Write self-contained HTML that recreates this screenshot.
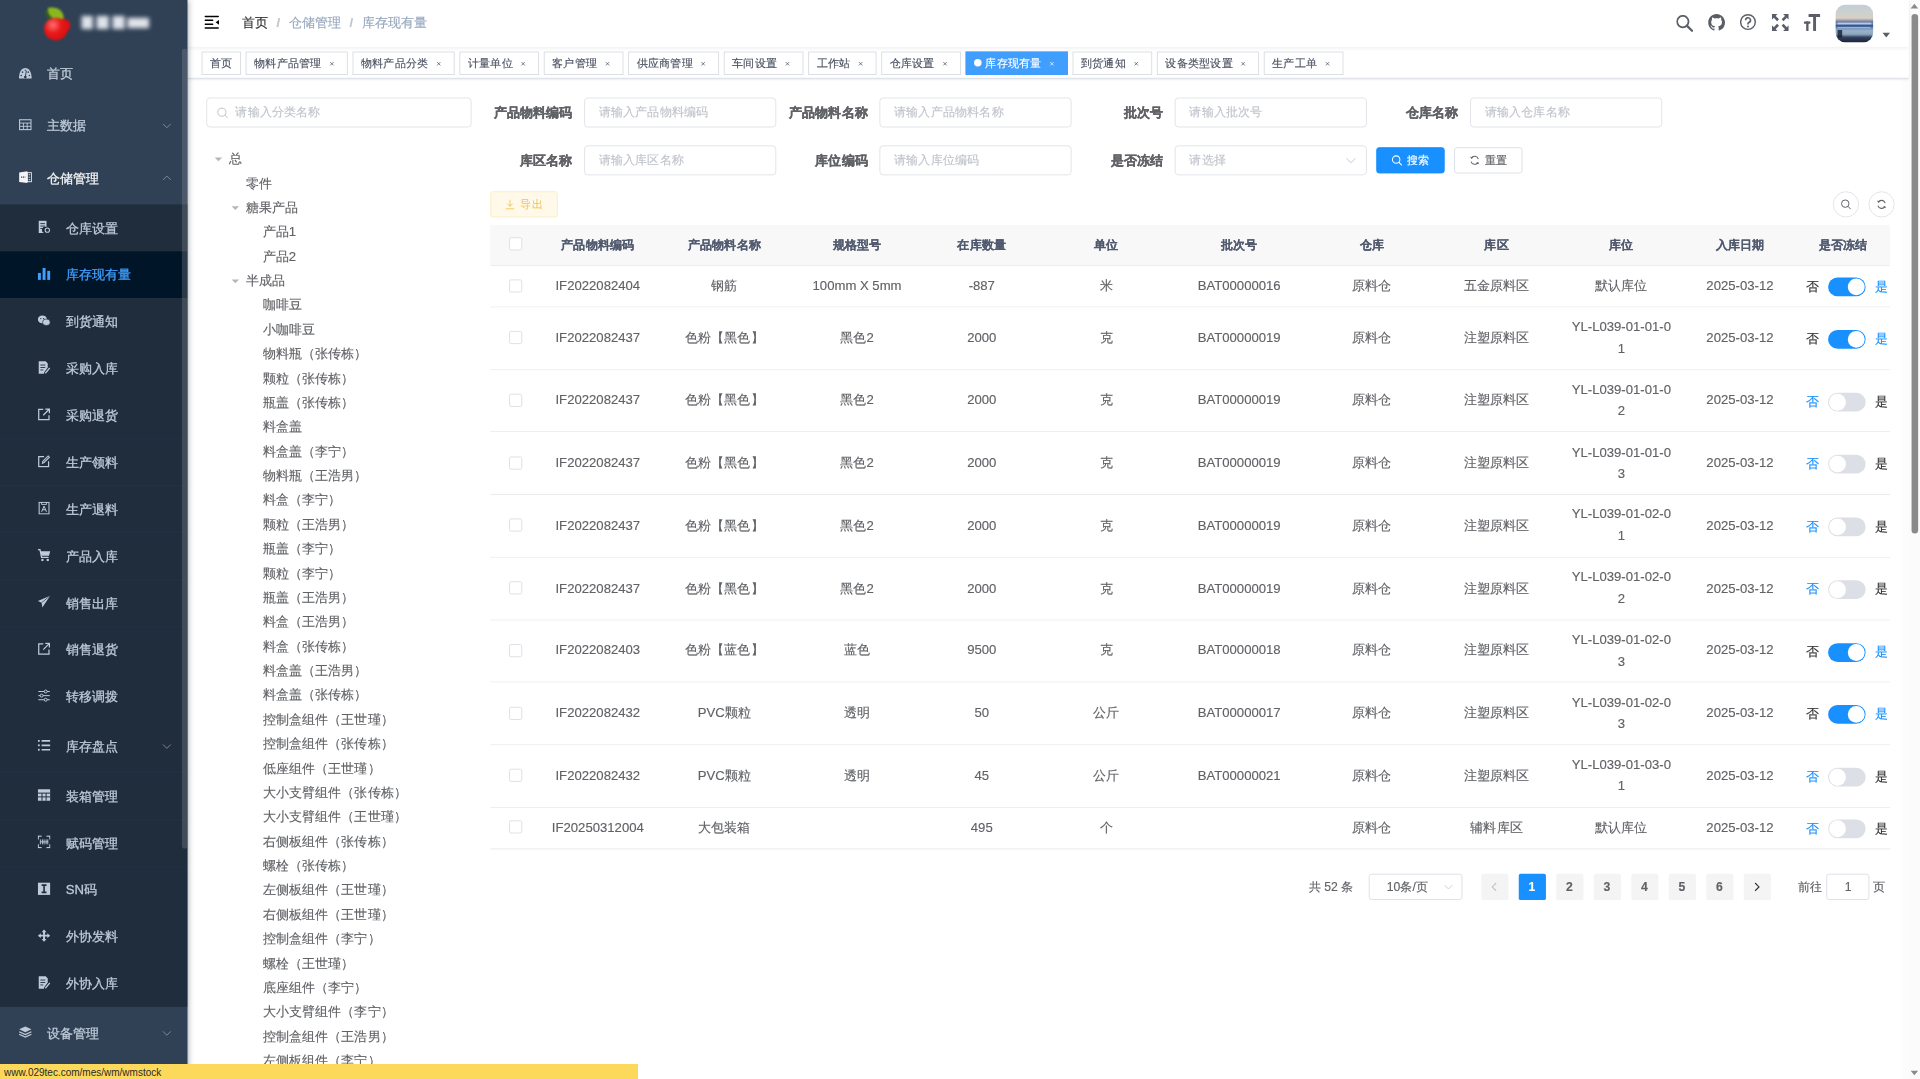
<!DOCTYPE html><html><head><meta charset="utf-8"><title>库存现有量</title><style>
*{box-sizing:border-box;margin:0;padding:0}
html,body{width:1920px;height:1079px;overflow:hidden;background:#fff}
body{font-family:"Liberation Sans",sans-serif;-webkit-font-smoothing:antialiased}
#root{-webkit-text-stroke-width:0.15px;position:absolute;left:0;top:0;width:2048px;height:1151px;transform:scale(0.9375);transform-origin:0 0;overflow:hidden;background:#fff}
#sidebar{position:absolute;left:0;top:0;width:200px;height:1151px;background:#304156;box-shadow:2px 0 6px rgba(0,21,41,.35);z-index:5;overflow:hidden}
.logo{position:absolute;left:0;top:0;width:200px;height:50px}
.cherry{position:absolute;left:45px;top:6px;width:34px;height:38px;filter:blur(1.3px)}
.berry{position:absolute;left:2px;top:13px;width:25px;height:24px;border-radius:50%;background:radial-gradient(circle at 38% 32%,#ff7070 0,#e81818 40%,#d20a0a 100%)}
.berry2{position:absolute;left:14px;top:14px;width:16px;height:15px;border-radius:50%;background:#e01010}
.leaf{position:absolute;left:6px;top:2px;width:17px;height:13px;background:#8cb61e;border-radius:2px 13px 2px 13px;box-shadow:-3px 3px 0 #2f5a2a}
.ltitle{position:absolute;left:87px;top:17px;width:72px;height:15px;filter:blur(2px)}
.ltitle i{position:absolute;top:0;height:14px;background:#dfe3ea}
.mi{position:absolute;left:0;width:200px;height:56px;line-height:56px;font-size:14px;white-space:nowrap}
.mi.top{padding-left:20px}
.mi.sub{padding-left:40px}
.mic{display:inline-block;width:14px;height:14px;vertical-align:middle;margin-right:16px;position:relative;top:-2px}
.mic svg{display:block}
.mtx{vertical-align:middle;position:relative;top:-1px;-webkit-text-stroke-width:0.3px}
.arr{position:absolute;right:16.5px;top:50%;margin-top:-6.5px;width:12px;height:12px}
.sthumb{position:absolute;left:194px;top:52px;width:6px;height:853px;background:rgba(144,147,153,.3);border-radius:3px}
#main{position:absolute;left:200px;top:0;width:1836px;height:1151px}
#navbar{position:absolute;left:200px;top:0;width:1836px;height:50px;background:#fff;box-shadow:0 1px 4px rgba(0,21,41,.08);z-index:3}
.ham{position:absolute;left:17.6px;top:16px;width:16px;height:16px}
.ham svg{display:block}
.bc{position:absolute;left:58px;top:-1px;line-height:50px;font-size:14px;white-space:nowrap}
.b0{color:#303133}
.b1{color:#97a8be}
.sep{margin:0 9px;color:#C0C4CC;font-weight:bold}
.rmi{position:absolute;top:16px;width:18px;height:18px}
.rmi.t15{top:15px}
.rmi svg{display:block}
.avatar{position:absolute;left:1758px;top:5px;width:40px;height:40px;border-radius:10px;overflow:hidden;background:linear-gradient(#c3ced4 0%,#ccd1d0 20%,#d8d0c3 36%,#9c9aad 42%,#5574a8 47%,#7b95bf 51%,#2e508a 56%,#6f8fb9 62%,#9ab2c9 70%,#8ba5bd 79%,#33405e 87%,#1d233a 100%)}
.av1{position:absolute;left:2px;top:19px;width:36px;height:2px;background:rgba(235,240,250,.6)}
.av2{position:absolute;left:2px;top:23.5px;width:35px;height:1.5px;background:rgba(235,240,250,.55)}
.av3{position:absolute;left:2px;top:27px;width:5px;height:8px;background:rgba(15,22,40,.75);filter:blur(.5px)}
.caret{position:absolute;left:1808px;top:35px;width:0;height:0;border-left:4px solid transparent;border-right:4px solid transparent;border-top:5px solid #5a5e66}
#tags{position:absolute;left:200px;top:50px;width:1836px;height:34px;background:#fff;border-bottom:1px solid #d8dce5;box-shadow:0 1px 3px 0 rgba(0,0,0,.12),0 0 3px 0 rgba(0,0,0,.04);z-index:2;white-space:nowrap;font-size:0}
.tag{display:inline-block;position:relative;height:25px;line-height:23px;border:1px solid #dadde3;color:#495060;background:#fff;padding:0 8px;font-size:12px;margin-left:5px;margin-top:5px;vertical-align:top}
.tag:first-child{margin-left:15px}
.tag.active{background:#409EFF;border-color:#409EFF;color:#fff}
.tdot{display:inline-block;width:8px;height:8px;border-radius:50%;background:#fff;margin-right:4px;position:relative;top:-0.5px}
.tclose{display:inline-block;width:16px;height:16px;vertical-align:-3px;margin-left:3px;position:relative}
.tclose svg{position:absolute;left:5px;top:6.5px}
.sinput{position:absolute;left:220px;top:104px;width:282.67px;height:32px;border:1px solid #dfe2e8;border-radius:4px;background:#fff}
.sinput .pi{position:absolute;left:10px;top:9px}
.sinput .ph{position:absolute;left:30px;top:0;line-height:30px;font-size:13px;color:#C0C4CC}
#tree{position:absolute;left:220px;top:156px;width:282.67px;font-size:14px;color:#606266}
.tn{height:26px;line-height:26px;white-space:nowrap}
.caret-r,.caret-n{display:inline-block;width:24px;height:26px;vertical-align:top;position:relative}
.caret-r:after{content:"";position:absolute;left:8.5px;top:11.5px;border-left:4px solid transparent;border-right:4px solid transparent;border-top:4.6px solid #b4b7bd}
.tl{vertical-align:top}
.flabel{position:absolute;width:100px;height:32px;line-height:32px;text-align:right;padding-right:12px;font-size:14px;font-weight:bold;color:#606266;white-space:nowrap;-webkit-text-stroke:0.3px #606266}
.finput{position:absolute;width:205px;height:32px;border:1px solid #dfe2e8;border-radius:4px;background:#fff}
.finput .ph{position:absolute;left:15px;top:0;line-height:30px;font-size:13px;color:#C0C4CC;white-space:nowrap}
.selarr{position:absolute;right:9px;top:8px;width:14px;height:14px}
.btn{position:absolute;height:28px;line-height:26px;font-size:12px;border-radius:3px;border:1px solid #DCDFE6;text-align:center;white-space:nowrap}
.btn .bic{display:inline-block;width:12px;height:12px;vertical-align:middle;margin-right:5px;position:relative;top:-1px}
.btn.primary{background:#1890ff;border-color:#1890ff;color:#fff}
.btn.plain{background:#fff;color:#606266}
.btn.warn{background:#fff9e9;border-color:#fcecc2;color:#f2c04c;-webkit-text-stroke-width:0}
.cbtn{position:absolute;width:28px;height:28px;border-radius:50%;border:1px solid #e0e2e6;background:#fff;padding:7px}
#table{position:absolute;font-size:14px;color:#606266}
.tr{display:flex;border-bottom:1px solid #e8eaee;background:#fff}
.tr.th{background:#f8f8f9;color:#515a6e;font-size:13px;font-weight:bold;-webkit-text-stroke:0.1px #515a6e}
.td{flex:none;display:flex;align-items:center;justify-content:center;text-align:center;overflow:hidden;padding:0 10px;line-height:23px;white-space:nowrap}
.td .cell{line-height:23px;position:relative;top:-0.8px}
.cb{display:inline-block;width:14px;height:14px;border:1px solid #DCDFE6;border-radius:2px;background:#fff;position:relative;top:-0.8px}
.th .cb{top:-1.4px}
.td.sw{justify-content:flex-start;padding-left:10px}
.swl{font-size:14px;color:#303133;line-height:20px}
.swl.act{color:#1890ff}
.swc{display:inline-block;position:relative;top:1px;width:40px;height:20px;border-radius:10px;background:#dcdfe6;margin:0 10px;flex:none}
.swc .knob{position:absolute;left:1px;top:1px;width:18px;height:18px;border-radius:50%;background:#fff}
.swc.on{background:#1890ff}
.swc.on .knob{left:21px}
.ptotal{position:absolute;height:28px;line-height:28px;font-size:13px;color:#606266;white-space:nowrap}
.psize{position:absolute;width:100px;height:28px;line-height:26px;border:1px solid #DCDFE6;border-radius:3px;font-size:13px;color:#606266;padding-left:8px}
.psize span:first-child{position:absolute;left:18.6px}
.psarr{position:absolute;right:8px;top:7px}
.pbtn{position:absolute;width:29px;margin-left:0.5px;height:28px;line-height:28px;background:#f4f4f5;border-radius:2px;text-align:center;font-size:13px;font-weight:bold;color:#606266;padding-top:8px}
.pbtn svg{margin:0 auto}
.pbtn.num{padding-top:0}
.pbtn.pact{background:#1890ff;color:#fff}
.pinput{position:absolute;width:46px;height:28px;line-height:26px;border:1px solid #DCDFE6;border-radius:3px;text-align:center;font-size:13px;color:#606266}
#vscroll{position:absolute;left:2036px;top:0;width:12px;height:1151px;background:#fbfbfb}
#vtrack{position:absolute;left:2027px;top:84px;width:9px;height:1067px;background:linear-gradient(90deg,#fefefe,#fbfbfb)}
#vscroll .up{position:absolute;left:2px;top:4px;border-left:4px solid transparent;border-right:4px solid transparent;border-bottom:5px solid #8a8a8a}
#vscroll .dn{position:absolute;left:2px;bottom:4px;border-left:4px solid transparent;border-right:4px solid transparent;border-top:5px solid #8a8a8a}
#vscroll .th{position:absolute;left:2.5px;top:15px;width:7px;height:553.5px;border-radius:3.5px;background:#8a8a8a}
#status{position:absolute;left:0;top:1063.5px;width:638px;height:15.5px;background:#fcd95b;font-size:10px;line-height:18px;padding-left:4px;color:#2a2a2a;z-index:10;white-space:nowrap}
</style></head><body><div id="root"><div id="sidebar">
<div class="logo"><div class="cherry"><div class="leaf"></div><div class="berry2"></div><div class="berry"></div></div><div class="ltitle"><i style="left:0;width:12px"></i><i style="left:16px;width:13px"></i><i style="left:33px;width:13px"></i><i style="left:49px;top:2px;width:23px;height:11px"></i></div></div>
<div class="mi top" style="top:50px;color:#bfcbd9"><span class="mic"><svg width="14" height="14" viewBox="0 0 16 16" style="overflow:visible"><path d="M0.3 15.8 C0.3 7.5 3.5 3 8 3 C12.5 3 15.7 7.5 15.7 15.8 Z" fill="#bfcbd9"/><path d="M8 13.8 L9.3 6.2" stroke="#304156" stroke-width="1.2"/><circle cx="8" cy="14" r="1.7" fill="#304156"/><circle cx="3" cy="12" r="1" fill="#304156"/><circle cx="4.6" cy="8" r="1" fill="#304156"/><circle cx="8" cy="5.6" r="0.8" fill="#304156"/><circle cx="11.6" cy="8" r="1" fill="#304156"/><circle cx="13" cy="12" r="1" fill="#304156"/></svg></span><span class="mtx">首页</span></div>
<div class="mi top" style="top:106px;color:#bfcbd9"><span class="mic"><svg width="14" height="14" viewBox="0 0 16 16"><rect x="1" y="2" width="14" height="12" fill="none" stroke="#bfcbd9" stroke-width="1.3"/><path d="M1 6 H15 M1 10 H15 M5.7 6 V14 M10.3 6 V14" stroke="#bfcbd9" stroke-width="1.1"/></svg></span><span class="mtx">主数据</span><span class="arr"><svg width="12" height="12" viewBox="0 0 16 16" style="display:block"><path d="M2.5 5.5 L8 11 L13.5 5.5" fill="none" stroke="#909399" stroke-width="1.2"/></svg></span></div>
<div class="mi top" style="top:162px;color:#f4f4f5"><span class="mic"><svg width="14" height="14" viewBox="0 0 16 16"><path d="M0.5 2.2 L10.5 0.8 V15.2 L0.5 13.8 Z" fill="#f4f4f5"/><rect x="10.5" y="2.5" width="5" height="11" fill="none" stroke="#f4f4f5" stroke-width="1.1"/><path d="M12 5 H14 M12 8 H14 M12 11 H14" stroke="#f4f4f5" stroke-width="1"/><path d="M2.8 8 H8" stroke="#304156" stroke-width="1.6" stroke-dasharray="1.5 0.8"/></svg></span><span class="mtx">仓储管理</span><span class="arr"><svg width="12" height="12" viewBox="0 0 16 16" style="display:block"><path d="M2.5 10.5 L8 5 L13.5 10.5" fill="none" stroke="#909399" stroke-width="1.2"/></svg></span></div>
<div class="mi sub" style="top:218px;height:50px;line-height:50px;background:#1f2d3d;color:#bfcbd9"><span class="mic"><svg width="14" height="14" viewBox="0 0 16 16"><path d="M1.5 0.5 H11 V8 A4 4 0 0 0 8 15.5 H1.5 Z" fill="#bfcbd9"/><path d="M3.5 4 H9 M3.5 7 H9 M3.5 10 H7" stroke="#1f2d3d" stroke-width="1.1"/><circle cx="12" cy="12" r="2.6" fill="none" stroke="#bfcbd9" stroke-width="1.3"/></svg></span><span class="mtx">仓库设置</span></div>
<div class="mi sub" style="top:268px;height:50px;line-height:50px;background:#001528;color:#409EFF"><span class="mic"><svg width="14" height="14" viewBox="0 0 16 16"><rect x="0.5" y="7" width="3.6" height="8.5" fill="#409EFF"/><rect x="6.2" y="1" width="3.6" height="14.5" fill="#409EFF"/><rect x="11.9" y="4.5" width="3.6" height="11" fill="#409EFF"/></svg></span><span class="mtx">库存现有量</span></div>
<div class="mi sub" style="top:318px;height:50px;line-height:50px;background:#1f2d3d;color:#bfcbd9"><span class="mic"><svg width="14" height="14" viewBox="0 0 16 16"><ellipse cx="6" cy="6.5" rx="5.5" ry="4.8" fill="#bfcbd9"/><ellipse cx="10.8" cy="10" rx="4.7" ry="4" fill="#bfcbd9" stroke="#1f2d3d" stroke-width="0.8"/><circle cx="4" cy="5.5" r="0.8" fill="#1f2d3d"/><circle cx="7.5" cy="5.5" r="0.8" fill="#1f2d3d"/></svg></span><span class="mtx">到货通知</span></div>
<div class="mi sub" style="top:368px;height:50px;line-height:50px;background:#1f2d3d;color:#bfcbd9"><span class="mic"><svg width="14" height="14" viewBox="0 0 16 16"><path d="M1.5 0.5 H10 L12.5 3 V8 L8 14 V15.5 H1.5 Z" fill="#bfcbd9"/><path d="M3.5 5 H9.5 M3.5 8 H9.5 M3.5 11 H7" stroke="#1f2d3d" stroke-width="1.1"/><path d="M9.5 15 L15 8.5" stroke="#bfcbd9" stroke-width="1.6"/></svg></span><span class="mtx">采购入库</span></div>
<div class="mi sub" style="top:418px;height:50px;line-height:50px;background:#1f2d3d;color:#bfcbd9"><span class="mic"><svg width="14" height="14" viewBox="0 0 16 16"><path d="M7 2 H1.5 V14.5 H14 V9" fill="none" stroke="#bfcbd9" stroke-width="1.5"/><path d="M7 9 L14.5 1.5 M9.5 1.5 H14.5 V6.5" fill="none" stroke="#bfcbd9" stroke-width="1.5"/></svg></span><span class="mtx">采购退货</span></div>
<div class="mi sub" style="top:468px;height:50px;line-height:50px;background:#1f2d3d;color:#bfcbd9"><span class="mic"><svg width="14" height="14" viewBox="0 0 16 16"><path d="M8 2.5 H1.5 V14.5 H13.5 V8" fill="none" stroke="#bfcbd9" stroke-width="1.5"/><path d="M6 10.5 L6.5 8 L13 1.5 L14.5 3 L8 9.5 Z" fill="none" stroke="#bfcbd9" stroke-width="1.3"/></svg></span><span class="mtx">生产领料</span></div>
<div class="mi sub" style="top:518px;height:50px;line-height:50px;background:#1f2d3d;color:#bfcbd9"><span class="mic"><svg width="14" height="14" viewBox="0 0 16 16"><rect x="2" y="1" width="12" height="14" fill="none" stroke="#bfcbd9" stroke-width="1.3"/><path d="M5 1 V3.5 H11 V1" fill="none" stroke="#bfcbd9" stroke-width="1.1"/><path d="M5 12.5 L8 5.5 L11 12.5 M6 10 H10" fill="none" stroke="#bfcbd9" stroke-width="1.2"/></svg></span><span class="mtx">生产退料</span></div>
<div class="mi sub" style="top:568px;height:50px;line-height:50px;background:#1f2d3d;color:#bfcbd9"><span class="mic"><svg width="14" height="14" viewBox="0 0 16 16"><path d="M0.5 1.5 H3 L5 11 H13.5" fill="none" stroke="#bfcbd9" stroke-width="1.6"/><path d="M3.6 3.5 H15.5 L14 9 H4.8 Z" fill="#bfcbd9"/><circle cx="6" cy="14" r="1.5" fill="#bfcbd9"/><circle cx="12.5" cy="14" r="1.5" fill="#bfcbd9"/></svg></span><span class="mtx">产品入库</span></div>
<div class="mi sub" style="top:618px;height:50px;line-height:50px;background:#1f2d3d;color:#bfcbd9"><span class="mic"><svg width="14" height="14" viewBox="0 0 16 16"><path d="M15.5 0.5 L0.5 7 L5 9 L6 15 L8.5 11 L15.5 0.5 Z" fill="#bfcbd9"/><path d="M5 9 L15.5 0.5" stroke="#1f2d3d" stroke-width="0.8"/></svg></span><span class="mtx">销售出库</span></div>
<div class="mi sub" style="top:668px;height:50px;line-height:50px;background:#1f2d3d;color:#bfcbd9"><span class="mic"><svg width="14" height="14" viewBox="0 0 16 16"><path d="M7 2 H1.5 V14.5 H14 V9" fill="none" stroke="#bfcbd9" stroke-width="1.5"/><path d="M7 9 L14.5 1.5 M9.5 1.5 H14.5 V6.5" fill="none" stroke="#bfcbd9" stroke-width="1.5"/></svg></span><span class="mtx">销售退货</span></div>
<div class="mi sub" style="top:718px;height:50px;line-height:50px;background:#1f2d3d;color:#bfcbd9"><span class="mic"><svg width="14" height="14" viewBox="0 0 16 16"><path d="M1 3 H15 M1 8 H15 M1 13 H15" stroke="#bfcbd9" stroke-width="1.2"/><circle cx="10" cy="3" r="1.8" fill="#1f2d3d" stroke="#bfcbd9" stroke-width="1.2"/><circle cx="5" cy="8" r="1.8" fill="#1f2d3d" stroke="#bfcbd9" stroke-width="1.2"/><circle cx="10" cy="13" r="1.8" fill="#1f2d3d" stroke="#bfcbd9" stroke-width="1.2"/></svg></span><span class="mtx">转移调拨</span></div>
<div class="mi sub" style="top:768px;height:56px;line-height:56px;background:#1f2d3d;color:#bfcbd9"><span class="mic"><svg width="14" height="14" viewBox="0 0 16 16"><rect x="0.5" y="1.5" width="2.2" height="2.2" fill="#bfcbd9"/><rect x="0.5" y="6.9" width="2.2" height="2.2" fill="#bfcbd9"/><rect x="0.5" y="12.3" width="2.2" height="2.2" fill="#bfcbd9"/><path d="M5 2.6 H15.5 M5 8 H15.5 M5 13.4 H15.5" stroke="#bfcbd9" stroke-width="2"/></svg></span><span class="mtx">库存盘点</span><span class="arr"><svg width="12" height="12" viewBox="0 0 16 16" style="display:block"><path d="M2.5 5.5 L8 11 L13.5 5.5" fill="none" stroke="#909399" stroke-width="1.2"/></svg></span></div>
<div class="mi sub" style="top:824px;height:50px;line-height:50px;background:#1f2d3d;color:#bfcbd9"><span class="mic"><svg width="14" height="14" viewBox="0 0 16 16"><rect x="0.5" y="1" width="15" height="14" fill="#bfcbd9"/><path d="M0.5 5.7 H15.5 M0.5 10.3 H15.5 M5.5 5.7 V15 M10.5 5.7 V15" stroke="#1f2d3d" stroke-width="1.2"/></svg></span><span class="mtx">装箱管理</span></div>
<div class="mi sub" style="top:874px;height:50px;line-height:50px;background:#1f2d3d;color:#bfcbd9"><span class="mic"><svg width="14" height="14" viewBox="0 0 16 16"><path d="M1 5 V1 H5 M11 1 H15 V5 M15 11 V15 H11 M5 15 H1 V11" fill="none" stroke="#bfcbd9" stroke-width="1.3"/><path d="M3.5 5 V11 M6 5 V11 M8 5 V11 M10.5 5 V11 M12.5 5 V11 M3 8 H13" stroke="#bfcbd9" stroke-width="1.1"/></svg></span><span class="mtx">赋码管理</span></div>
<div class="mi sub" style="top:924px;height:50px;line-height:50px;background:#1f2d3d;color:#bfcbd9"><span class="mic"><svg width="14" height="14" viewBox="0 0 16 16"><rect x="0.5" y="0.5" width="15" height="15" fill="#bfcbd9"/><path d="M5 3.5 H11 M5 12.5 H11 M8 3.5 V12.5" stroke="#1f2d3d" stroke-width="2"/></svg></span><span class="mtx">SN码</span></div>
<div class="mi sub" style="top:974px;height:50px;line-height:50px;background:#1f2d3d;color:#bfcbd9"><span class="mic"><svg width="14" height="14" viewBox="0 0 16 16"><path d="M8 0.5 L11 4 H9.2 V6.8 H12 V5 L15.5 8 L12 11 V9.2 H9.2 V12 H11 L8 15.5 L5 12 H6.8 V9.2 H4 V11 L0.5 8 L4 5 V6.8 H6.8 V4 H5 Z" fill="#bfcbd9"/></svg></span><span class="mtx">外协发料</span></div>
<div class="mi sub" style="top:1024px;height:50px;line-height:50px;background:#1f2d3d;color:#bfcbd9"><span class="mic"><svg width="14" height="14" viewBox="0 0 16 16"><path d="M1.5 0.5 H10 L12.5 3 V8 L8 14 V15.5 H1.5 Z" fill="#bfcbd9"/><path d="M3.5 5 H9.5 M3.5 8 H9.5 M3.5 11 H7" stroke="#1f2d3d" stroke-width="1.1"/><path d="M9.5 15 L15 8.5" stroke="#bfcbd9" stroke-width="1.6"/></svg></span><span class="mtx">外协入库</span></div>
<div class="mi top" style="top:1074px;color:#bfcbd9"><span class="mic"><svg width="14" height="14" viewBox="0 0 16 16"><path d="M8 1 L15.5 4.5 L8 8 L0.5 4.5 Z" fill="#bfcbd9"/><path d="M0.5 7.5 L8 11 L15.5 7.5 M0.5 10.5 L8 14 L15.5 10.5" fill="none" stroke="#bfcbd9" stroke-width="1.6"/></svg></span><span class="mtx">设备管理</span><span class="arr"><svg width="12" height="12" viewBox="0 0 16 16" style="display:block"><path d="M2.5 5.5 L8 11 L13.5 5.5" fill="none" stroke="#909399" stroke-width="1.2"/></svg></span></div>
<div class="sthumb"></div>
</div><div id="navbar">
<div class="ham"><svg width="16" height="16" viewBox="0 0 16 16"><g fill="#000"><rect x="0" y="0.7" width="15.5" height="1.7" rx="0.8"/><rect x="0" y="4.8" width="9.6" height="1.7" rx="0.8"/><rect x="0" y="8.95" width="9.6" height="1.7" rx="0.8"/><rect x="0" y="13.05" width="15.5" height="1.7" rx="0.8"/><path d="M15.6 5.2 V10.3 L12 7.75 Z"/></g></svg></div>
<div class="bc"><span class="b0">首页</span><span class="sep">/</span><span class="b1">仓储管理</span><span class="sep">/</span><span class="b1">库存现有量</span></div>
<div class="rmi" style="left:1588px"><svg width="18" height="18" viewBox="0 0 18 18"><circle cx="7" cy="7" r="6.1" fill="none" stroke="#5a5e66" stroke-width="1.9"/><path d="M11.3 11.3 L16.8 16.8" stroke="#5a5e66" stroke-width="2.4" stroke-linecap="round"/></svg></div>
<div class="rmi t15" style="left:1622px"><svg width="18" height="18" viewBox="0 0 16 16"><path fill="#5a5e66" d="M8 0C3.58 0 0 3.58 0 8c0 3.54 2.29 6.53 5.47 7.59.4.07.55-.17.55-.38 0-.19-.01-.82-.01-1.49-2.01.37-2.53-.49-2.69-.94-.09-.23-.48-.94-.82-1.13-.28-.15-.68-.52-.01-.53.63-.01 1.08.58 1.23.82.72 1.21 1.87.87 2.33.66.07-.52.28-.87.51-1.07-1.78-.2-3.64-.89-3.64-3.95 0-.87.31-1.59.82-2.15-.08-.2-.36-1.02.08-2.12 0 0 .67-.21 2.2.82.64-.18 1.32-.27 2-.27.68 0 1.36.09 2 .27 1.53-1.04 2.2-.82 2.2-.82.44 1.1.16 1.92.08 2.12.51.56.82 1.27.82 2.15 0 3.07-1.87 3.75-3.65 3.95.29.25.54.73.54 1.48 0 1.07-.01 1.93-.01 2.2 0 .21.15.46.55.38A8.013 8.013 0 0016 8c0-4.42-3.58-8-8-8z"/></svg></div>
<div class="rmi t15" style="left:1656px"><svg width="18" height="18" viewBox="0 0 18 18"><circle cx="8.5" cy="8.5" r="7.8" fill="none" stroke="#5a5e66" stroke-width="1.5"/><path d="M6 6.6 A2.6 2.6 0 1 1 9.4 9 C8.8 9.3 8.5 9.8 8.5 10.5 V11.2" fill="none" stroke="#5a5e66" stroke-width="1.7"/><circle cx="8.5" cy="13.3" r="1" fill="#5a5e66"/></svg></div>
<div class="rmi t15" style="left:1690px"><svg width="18" height="18" viewBox="0 0 18 18"><g fill="#5a5e66"><path d="M0 0 H6 L0 6 Z"/><path d="M18 0 V6 L12 0 Z"/><path d="M0 18 V12 L6 18 Z"/><path d="M18 18 H12 L18 12 Z"/></g><g stroke="#5a5e66" stroke-width="2.8"><path d="M2 2 L6.6 6.6 M16 2 L11.4 6.6 M2 16 L6.6 11.4 M16 16 L11.4 11.4"/></g></svg></div>
<div class="rmi t15" style="left:1724px"><svg width="18" height="18" viewBox="0 0 18 18"><g fill="#5a5e66"><rect x="5.1" y="0" width="12.4" height="3.1" rx="0.6"/><rect x="10" y="0" width="3.1" height="18"/><rect x="0" y="7.8" width="7.1" height="2.5" rx="0.5"/><rect x="2.6" y="7.8" width="2.5" height="10.2"/></g></svg></div>
<div class="avatar"><div class="av1"></div><div class="av2"></div><div class="av3"></div></div>
<div class="caret"></div>
</div><div id="tags"><span class="tag">首页</span><span class="tag">物料产品管理<span class="tclose"><svg width="6" height="6" viewBox="0 0 10 10" style="display:block"><path d="M2 2 L8 8 M8 2 L2 8" stroke="#495060" stroke-width="1.3"/></svg></span></span><span class="tag">物料产品分类<span class="tclose"><svg width="6" height="6" viewBox="0 0 10 10" style="display:block"><path d="M2 2 L8 8 M8 2 L2 8" stroke="#495060" stroke-width="1.3"/></svg></span></span><span class="tag">计量单位<span class="tclose"><svg width="6" height="6" viewBox="0 0 10 10" style="display:block"><path d="M2 2 L8 8 M8 2 L2 8" stroke="#495060" stroke-width="1.3"/></svg></span></span><span class="tag">客户管理<span class="tclose"><svg width="6" height="6" viewBox="0 0 10 10" style="display:block"><path d="M2 2 L8 8 M8 2 L2 8" stroke="#495060" stroke-width="1.3"/></svg></span></span><span class="tag">供应商管理<span class="tclose"><svg width="6" height="6" viewBox="0 0 10 10" style="display:block"><path d="M2 2 L8 8 M8 2 L2 8" stroke="#495060" stroke-width="1.3"/></svg></span></span><span class="tag">车间设置<span class="tclose"><svg width="6" height="6" viewBox="0 0 10 10" style="display:block"><path d="M2 2 L8 8 M8 2 L2 8" stroke="#495060" stroke-width="1.3"/></svg></span></span><span class="tag">工作站<span class="tclose"><svg width="6" height="6" viewBox="0 0 10 10" style="display:block"><path d="M2 2 L8 8 M8 2 L2 8" stroke="#495060" stroke-width="1.3"/></svg></span></span><span class="tag">仓库设置<span class="tclose"><svg width="6" height="6" viewBox="0 0 10 10" style="display:block"><path d="M2 2 L8 8 M8 2 L2 8" stroke="#495060" stroke-width="1.3"/></svg></span></span><span class="tag active"><span class="tdot"></span>库存现有量<span class="tclose"><svg width="6" height="6" viewBox="0 0 10 10" style="display:block"><path d="M2 2 L8 8 M8 2 L2 8" stroke="#fff" stroke-width="1.3"/></svg></span></span><span class="tag">到货通知<span class="tclose"><svg width="6" height="6" viewBox="0 0 10 10" style="display:block"><path d="M2 2 L8 8 M8 2 L2 8" stroke="#495060" stroke-width="1.3"/></svg></span></span><span class="tag">设备类型设置<span class="tclose"><svg width="6" height="6" viewBox="0 0 10 10" style="display:block"><path d="M2 2 L8 8 M8 2 L2 8" stroke="#495060" stroke-width="1.3"/></svg></span></span><span class="tag">生产工单<span class="tclose"><svg width="6" height="6" viewBox="0 0 10 10" style="display:block"><path d="M2 2 L8 8 M8 2 L2 8" stroke="#495060" stroke-width="1.3"/></svg></span></span></div><div class="sinput"><span class="pi"><svg width="13" height="13" viewBox="0 0 16 16" style="display:block"><circle cx="7" cy="7" r="5.3" fill="none" stroke="#C0C4CC" stroke-width="1.3"/><path d="M11 11 L14.5 14.5" stroke="#C0C4CC" stroke-width="1.3" stroke-linecap="round"/></svg></span><span class="ph">请输入分类名称</span></div><div id="tree"><div class="tn" style="padding-left:0px"><span class="caret-r"></span><span class="tl">总</span></div><div class="tn" style="padding-left:18px"><span class="caret-n"></span><span class="tl">零件</span></div><div class="tn" style="padding-left:18px"><span class="caret-r"></span><span class="tl">糖果产品</span></div><div class="tn" style="padding-left:36px"><span class="caret-n"></span><span class="tl">产品1</span></div><div class="tn" style="padding-left:36px"><span class="caret-n"></span><span class="tl">产品2</span></div><div class="tn" style="padding-left:18px"><span class="caret-r"></span><span class="tl">半成品</span></div><div class="tn" style="padding-left:36px"><span class="caret-n"></span><span class="tl">咖啡豆</span></div><div class="tn" style="padding-left:36px"><span class="caret-n"></span><span class="tl">小咖啡豆</span></div><div class="tn" style="padding-left:36px"><span class="caret-n"></span><span class="tl">物料瓶（张传栋）</span></div><div class="tn" style="padding-left:36px"><span class="caret-n"></span><span class="tl">颗粒（张传栋）</span></div><div class="tn" style="padding-left:36px"><span class="caret-n"></span><span class="tl">瓶盖（张传栋）</span></div><div class="tn" style="padding-left:36px"><span class="caret-n"></span><span class="tl">料盒盖</span></div><div class="tn" style="padding-left:36px"><span class="caret-n"></span><span class="tl">料盒盖（李宁）</span></div><div class="tn" style="padding-left:36px"><span class="caret-n"></span><span class="tl">物料瓶（王浩男）</span></div><div class="tn" style="padding-left:36px"><span class="caret-n"></span><span class="tl">料盒（李宁）</span></div><div class="tn" style="padding-left:36px"><span class="caret-n"></span><span class="tl">颗粒（王浩男）</span></div><div class="tn" style="padding-left:36px"><span class="caret-n"></span><span class="tl">瓶盖（李宁）</span></div><div class="tn" style="padding-left:36px"><span class="caret-n"></span><span class="tl">颗粒（李宁）</span></div><div class="tn" style="padding-left:36px"><span class="caret-n"></span><span class="tl">瓶盖（王浩男）</span></div><div class="tn" style="padding-left:36px"><span class="caret-n"></span><span class="tl">料盒（王浩男）</span></div><div class="tn" style="padding-left:36px"><span class="caret-n"></span><span class="tl">料盒（张传栋）</span></div><div class="tn" style="padding-left:36px"><span class="caret-n"></span><span class="tl">料盒盖（王浩男）</span></div><div class="tn" style="padding-left:36px"><span class="caret-n"></span><span class="tl">料盒盖（张传栋）</span></div><div class="tn" style="padding-left:36px"><span class="caret-n"></span><span class="tl">控制盒组件（王世瑾）</span></div><div class="tn" style="padding-left:36px"><span class="caret-n"></span><span class="tl">控制盒组件（张传栋）</span></div><div class="tn" style="padding-left:36px"><span class="caret-n"></span><span class="tl">低座组件（王世瑾）</span></div><div class="tn" style="padding-left:36px"><span class="caret-n"></span><span class="tl">大小支臂组件（张传栋）</span></div><div class="tn" style="padding-left:36px"><span class="caret-n"></span><span class="tl">大小支臂组件（王世瑾）</span></div><div class="tn" style="padding-left:36px"><span class="caret-n"></span><span class="tl">右侧板组件（张传栋）</span></div><div class="tn" style="padding-left:36px"><span class="caret-n"></span><span class="tl">螺栓（张传栋）</span></div><div class="tn" style="padding-left:36px"><span class="caret-n"></span><span class="tl">左侧板组件（王世瑾）</span></div><div class="tn" style="padding-left:36px"><span class="caret-n"></span><span class="tl">右侧板组件（王世瑾）</span></div><div class="tn" style="padding-left:36px"><span class="caret-n"></span><span class="tl">控制盒组件（李宁）</span></div><div class="tn" style="padding-left:36px"><span class="caret-n"></span><span class="tl">螺栓（王世瑾）</span></div><div class="tn" style="padding-left:36px"><span class="caret-n"></span><span class="tl">底座组件（李宁）</span></div><div class="tn" style="padding-left:36px"><span class="caret-n"></span><span class="tl">大小支臂组件（李宁）</span></div><div class="tn" style="padding-left:36px"><span class="caret-n"></span><span class="tl">控制盒组件（王浩男）</span></div><div class="tn" style="padding-left:36px"><span class="caret-n"></span><span class="tl">左侧板组件（李宁）</span></div><div class="tn" style="padding-left:36px"><span class="caret-n"></span><span class="tl">右侧板组件（李宁）</span></div></div><div class="flabel" style="left:522.67px;top:104px">产品物料编码</div><div class="finput" style="left:622.67px;top:104px"><span class="ph">请输入产品物料编码</span></div><div class="flabel" style="left:837.67px;top:104px">产品物料名称</div><div class="finput" style="left:937.67px;top:104px"><span class="ph">请输入产品物料名称</span></div><div class="flabel" style="left:1152.67px;top:104px">批次号</div><div class="finput" style="left:1252.67px;top:104px"><span class="ph">请输入批次号</span></div><div class="flabel" style="left:1467.67px;top:104px">仓库名称</div><div class="finput" style="left:1567.67px;top:104px"><span class="ph">请输入仓库名称</span></div><div class="flabel" style="left:522.67px;top:154.7px">库区名称</div><div class="finput" style="left:622.67px;top:154.7px"><span class="ph">请输入库区名称</span></div><div class="flabel" style="left:837.67px;top:154.7px">库位编码</div><div class="finput" style="left:937.67px;top:154.7px"><span class="ph">请输入库位编码</span></div><div class="flabel" style="left:1152.67px;top:154.7px">是否冻结</div><div class="finput" style="left:1252.67px;top:154.7px"><span class="ph">请选择</span><span class="selarr"><svg width="14" height="14" viewBox="0 0 16 16" style="display:block"><path d="M2.5 5.5 L8 11 L13.5 5.5" fill="none" stroke="#C0C4CC" stroke-width="1.1"/></svg></span></div><div class="btn primary" style="left:1467.67px;top:156.7px;width:73px"><span class="bic"><svg width="12" height="12" viewBox="0 0 16 16" style="display:block"><circle cx="7" cy="7" r="5.3" fill="none" stroke="#fff" stroke-width="1.5"/><path d="M11 11 L14.5 14.5" stroke="#fff" stroke-width="1.5" stroke-linecap="round"/></svg></span>搜索</div><div class="btn plain" style="left:1550.67px;top:156.7px;width:73px"><span class="bic"><svg width="12" height="12" viewBox="0 0 16 16" style="display:block"><path d="M13.2 6.2 A5.5 5.5 0 0 0 3.2 5" fill="none" stroke="#606266" stroke-width="1.5"/><path d="M2.8 9.8 A5.5 5.5 0 0 0 12.8 11" fill="none" stroke="#606266" stroke-width="1.5"/><path d="M1.5 2.5 L3.2 5.6 L6.3 4.3 Z" fill="#606266"/><path d="M14.5 13.5 L12.8 10.4 L9.7 11.7 Z" fill="#606266"/></svg></span>重置</div><div class="btn warn" style="left:522.67px;top:204px;width:72px"><span class="bic"><svg width="12" height="12" viewBox="0 0 16 16" style="display:block"><path d="M8 1.5 V10.5 M4.2 7 L8 10.8 L11.8 7" fill="none" stroke="#f2c04c" stroke-width="1.2"/><path d="M2 14.3 H14" stroke="#f2c04c" stroke-width="1.2"/></svg></span>导出</div><div class="cbtn" style="left:1955px;top:204px"><svg width="12" height="12" viewBox="0 0 16 16" style="display:block"><circle cx="7" cy="7" r="5.3" fill="none" stroke="#606266" stroke-width="1.4"/><path d="M11 11 L14.5 14.5" stroke="#606266" stroke-width="1.4" stroke-linecap="round"/></svg></div><div class="cbtn" style="left:1993px;top:204px"><svg width="12" height="12" viewBox="0 0 16 16" style="display:block"><path d="M13.2 6.2 A5.5 5.5 0 0 0 3.2 5" fill="none" stroke="#606266" stroke-width="1.5"/><path d="M2.8 9.8 A5.5 5.5 0 0 0 12.8 11" fill="none" stroke="#606266" stroke-width="1.5"/><path d="M1.5 2.5 L3.2 5.6 L6.3 4.3 Z" fill="#606266"/><path d="M14.5 13.5 L12.8 10.4 L9.7 11.7 Z" fill="#606266"/></svg></div><div id="table" style="left:522.67px;top:240.2px;width:1493.33px"><div class="tr th" style="height:43.8px"><div class="td" style="width:55px"><span class="cb"></span></div><div class="td" style="width:120px">产品物料编码</div><div class="td" style="width:150px">产品物料名称</div><div class="td" style="width:133.05499999999998px">规格型号</div><div class="td" style="width:133.05499999999998px">在库数量</div><div class="td" style="width:133.05499999999998px">单位</div><div class="td" style="width:150px">批次号</div><div class="td" style="width:133.05499999999998px">仓库</div><div class="td" style="width:133.05499999999998px">库区</div><div class="td" style="width:133.05499999999998px">库位</div><div class="td" style="width:120px">入库日期</div><div class="td" style="width:100px">是否冻结</div></div><div class="tr" style="height:44.0px"><div class="td" style="width:55px"><span class="cb"></span></div><div class="td" style="width:120px"><div class="cell">IF2022082404</div></div><div class="td" style="width:150px"><div class="cell">钢筋</div></div><div class="td" style="width:133.05499999999998px"><div class="cell">100mm X 5mm</div></div><div class="td" style="width:133.05499999999998px"><div class="cell">-887</div></div><div class="td" style="width:133.05499999999998px"><div class="cell">米</div></div><div class="td" style="width:150px"><div class="cell">BAT00000016</div></div><div class="td" style="width:133.05499999999998px"><div class="cell">原料仓</div></div><div class="td" style="width:133.05499999999998px"><div class="cell">五金原料区</div></div><div class="td" style="width:133.05499999999998px"><div class="cell">默认库位</div></div><div class="td" style="width:120px"><div class="cell">2025-03-12</div></div><div class="td sw" style="width:100px"><span class="swl ">否</span><span class="swc on"><span class="knob"></span></span><span class="swl act">是</span></div></div><div class="tr" style="height:66.75px"><div class="td" style="width:55px"><span class="cb"></span></div><div class="td" style="width:120px"><div class="cell">IF2022082437</div></div><div class="td" style="width:150px"><div class="cell">色粉【黑色】</div></div><div class="td" style="width:133.05499999999998px"><div class="cell">黑色2</div></div><div class="td" style="width:133.05499999999998px"><div class="cell">2000</div></div><div class="td" style="width:133.05499999999998px"><div class="cell">克</div></div><div class="td" style="width:150px"><div class="cell">BAT00000019</div></div><div class="td" style="width:133.05499999999998px"><div class="cell">原料仓</div></div><div class="td" style="width:133.05499999999998px"><div class="cell">注塑原料区</div></div><div class="td" style="width:133.05499999999998px"><div class="cell">YL-L039-01-01-0<br>1</div></div><div class="td" style="width:120px"><div class="cell">2025-03-12</div></div><div class="td sw" style="width:100px"><span class="swl ">否</span><span class="swc on"><span class="knob"></span></span><span class="swl act">是</span></div></div><div class="tr" style="height:66.75px"><div class="td" style="width:55px"><span class="cb"></span></div><div class="td" style="width:120px"><div class="cell">IF2022082437</div></div><div class="td" style="width:150px"><div class="cell">色粉【黑色】</div></div><div class="td" style="width:133.05499999999998px"><div class="cell">黑色2</div></div><div class="td" style="width:133.05499999999998px"><div class="cell">2000</div></div><div class="td" style="width:133.05499999999998px"><div class="cell">克</div></div><div class="td" style="width:150px"><div class="cell">BAT00000019</div></div><div class="td" style="width:133.05499999999998px"><div class="cell">原料仓</div></div><div class="td" style="width:133.05499999999998px"><div class="cell">注塑原料区</div></div><div class="td" style="width:133.05499999999998px"><div class="cell">YL-L039-01-01-0<br>2</div></div><div class="td" style="width:120px"><div class="cell">2025-03-12</div></div><div class="td sw" style="width:100px"><span class="swl act">否</span><span class="swc "><span class="knob"></span></span><span class="swl ">是</span></div></div><div class="tr" style="height:66.75px"><div class="td" style="width:55px"><span class="cb"></span></div><div class="td" style="width:120px"><div class="cell">IF2022082437</div></div><div class="td" style="width:150px"><div class="cell">色粉【黑色】</div></div><div class="td" style="width:133.05499999999998px"><div class="cell">黑色2</div></div><div class="td" style="width:133.05499999999998px"><div class="cell">2000</div></div><div class="td" style="width:133.05499999999998px"><div class="cell">克</div></div><div class="td" style="width:150px"><div class="cell">BAT00000019</div></div><div class="td" style="width:133.05499999999998px"><div class="cell">原料仓</div></div><div class="td" style="width:133.05499999999998px"><div class="cell">注塑原料区</div></div><div class="td" style="width:133.05499999999998px"><div class="cell">YL-L039-01-01-0<br>3</div></div><div class="td" style="width:120px"><div class="cell">2025-03-12</div></div><div class="td sw" style="width:100px"><span class="swl act">否</span><span class="swc "><span class="knob"></span></span><span class="swl ">是</span></div></div><div class="tr" style="height:66.75px"><div class="td" style="width:55px"><span class="cb"></span></div><div class="td" style="width:120px"><div class="cell">IF2022082437</div></div><div class="td" style="width:150px"><div class="cell">色粉【黑色】</div></div><div class="td" style="width:133.05499999999998px"><div class="cell">黑色2</div></div><div class="td" style="width:133.05499999999998px"><div class="cell">2000</div></div><div class="td" style="width:133.05499999999998px"><div class="cell">克</div></div><div class="td" style="width:150px"><div class="cell">BAT00000019</div></div><div class="td" style="width:133.05499999999998px"><div class="cell">原料仓</div></div><div class="td" style="width:133.05499999999998px"><div class="cell">注塑原料区</div></div><div class="td" style="width:133.05499999999998px"><div class="cell">YL-L039-01-02-0<br>1</div></div><div class="td" style="width:120px"><div class="cell">2025-03-12</div></div><div class="td sw" style="width:100px"><span class="swl act">否</span><span class="swc "><span class="knob"></span></span><span class="swl ">是</span></div></div><div class="tr" style="height:66.75px"><div class="td" style="width:55px"><span class="cb"></span></div><div class="td" style="width:120px"><div class="cell">IF2022082437</div></div><div class="td" style="width:150px"><div class="cell">色粉【黑色】</div></div><div class="td" style="width:133.05499999999998px"><div class="cell">黑色2</div></div><div class="td" style="width:133.05499999999998px"><div class="cell">2000</div></div><div class="td" style="width:133.05499999999998px"><div class="cell">克</div></div><div class="td" style="width:150px"><div class="cell">BAT00000019</div></div><div class="td" style="width:133.05499999999998px"><div class="cell">原料仓</div></div><div class="td" style="width:133.05499999999998px"><div class="cell">注塑原料区</div></div><div class="td" style="width:133.05499999999998px"><div class="cell">YL-L039-01-02-0<br>2</div></div><div class="td" style="width:120px"><div class="cell">2025-03-12</div></div><div class="td sw" style="width:100px"><span class="swl act">否</span><span class="swc "><span class="knob"></span></span><span class="swl ">是</span></div></div><div class="tr" style="height:66.75px"><div class="td" style="width:55px"><span class="cb"></span></div><div class="td" style="width:120px"><div class="cell">IF2022082403</div></div><div class="td" style="width:150px"><div class="cell">色粉【蓝色】</div></div><div class="td" style="width:133.05499999999998px"><div class="cell">蓝色</div></div><div class="td" style="width:133.05499999999998px"><div class="cell">9500</div></div><div class="td" style="width:133.05499999999998px"><div class="cell">克</div></div><div class="td" style="width:150px"><div class="cell">BAT00000018</div></div><div class="td" style="width:133.05499999999998px"><div class="cell">原料仓</div></div><div class="td" style="width:133.05499999999998px"><div class="cell">注塑原料区</div></div><div class="td" style="width:133.05499999999998px"><div class="cell">YL-L039-01-02-0<br>3</div></div><div class="td" style="width:120px"><div class="cell">2025-03-12</div></div><div class="td sw" style="width:100px"><span class="swl ">否</span><span class="swc on"><span class="knob"></span></span><span class="swl act">是</span></div></div><div class="tr" style="height:66.75px"><div class="td" style="width:55px"><span class="cb"></span></div><div class="td" style="width:120px"><div class="cell">IF2022082432</div></div><div class="td" style="width:150px"><div class="cell">PVC颗粒</div></div><div class="td" style="width:133.05499999999998px"><div class="cell">透明</div></div><div class="td" style="width:133.05499999999998px"><div class="cell">50</div></div><div class="td" style="width:133.05499999999998px"><div class="cell">公斤</div></div><div class="td" style="width:150px"><div class="cell">BAT00000017</div></div><div class="td" style="width:133.05499999999998px"><div class="cell">原料仓</div></div><div class="td" style="width:133.05499999999998px"><div class="cell">注塑原料区</div></div><div class="td" style="width:133.05499999999998px"><div class="cell">YL-L039-01-02-0<br>3</div></div><div class="td" style="width:120px"><div class="cell">2025-03-12</div></div><div class="td sw" style="width:100px"><span class="swl ">否</span><span class="swc on"><span class="knob"></span></span><span class="swl act">是</span></div></div><div class="tr" style="height:66.75px"><div class="td" style="width:55px"><span class="cb"></span></div><div class="td" style="width:120px"><div class="cell">IF2022082432</div></div><div class="td" style="width:150px"><div class="cell">PVC颗粒</div></div><div class="td" style="width:133.05499999999998px"><div class="cell">透明</div></div><div class="td" style="width:133.05499999999998px"><div class="cell">45</div></div><div class="td" style="width:133.05499999999998px"><div class="cell">公斤</div></div><div class="td" style="width:150px"><div class="cell">BAT00000021</div></div><div class="td" style="width:133.05499999999998px"><div class="cell">原料仓</div></div><div class="td" style="width:133.05499999999998px"><div class="cell">注塑原料区</div></div><div class="td" style="width:133.05499999999998px"><div class="cell">YL-L039-01-03-0<br>1</div></div><div class="td" style="width:120px"><div class="cell">2025-03-12</div></div><div class="td sw" style="width:100px"><span class="swl act">否</span><span class="swc "><span class="knob"></span></span><span class="swl ">是</span></div></div><div class="tr" style="height:43.6px"><div class="td" style="width:55px"><span class="cb"></span></div><div class="td" style="width:120px"><div class="cell">IF20250312004</div></div><div class="td" style="width:150px"><div class="cell">大包装箱</div></div><div class="td" style="width:133.05499999999998px"><div class="cell"></div></div><div class="td" style="width:133.05499999999998px"><div class="cell">495</div></div><div class="td" style="width:133.05499999999998px"><div class="cell">个</div></div><div class="td" style="width:150px"><div class="cell"></div></div><div class="td" style="width:133.05499999999998px"><div class="cell">原料仓</div></div><div class="td" style="width:133.05499999999998px"><div class="cell">辅料库区</div></div><div class="td" style="width:133.05499999999998px"><div class="cell">默认库位</div></div><div class="td" style="width:120px"><div class="cell">2025-03-12</div></div><div class="td sw" style="width:100px"><span class="swl act">否</span><span class="swc "><span class="knob"></span></span><span class="swl ">是</span></div></div></div><div class="ptotal" style="left:1396px;top:932.4px">共 52 条</div><div class="psize" style="left:1459.6px;top:932.4px"><span>10条/页</span><span class="psarr"><svg width="12" height="12" viewBox="0 0 16 16" style="display:block"><path d="M2.5 5.5 L8 11 L13.5 5.5" fill="none" stroke="#C0C4CC" stroke-width="1.1"/></svg></span></div><div class="pbtn" style="left:1579px;top:932.4px"><svg width="12" height="12" viewBox="0 0 16 16" style="display:block"><path d="M10.5 2.5 L5 8 L10.5 13.5" fill="none" stroke="#C0C4CC" stroke-width="1.6"/></svg></div><div class="pbtn num pact" style="left:1619px;top:932.4px">1</div><div class="pbtn num" style="left:1659px;top:932.4px">2</div><div class="pbtn num" style="left:1699px;top:932.4px">3</div><div class="pbtn num" style="left:1739px;top:932.4px">4</div><div class="pbtn num" style="left:1779px;top:932.4px">5</div><div class="pbtn num" style="left:1819px;top:932.4px">6</div><div class="pbtn" style="left:1859px;top:932.4px"><svg width="12" height="12" viewBox="0 0 16 16" style="display:block"><path d="M5.5 2.5 L11 8 L5.5 13.5" fill="none" stroke="#303133" stroke-width="1.6"/></svg></div><div class="ptotal" style="left:1918px;top:932.4px">前往</div><div class="pinput" style="left:1948.4px;top:932.4px">1</div><div class="ptotal" style="left:1997.5px;top:932.4px">页</div><div id="vtrack"></div><div id="vscroll"><div class="up"></div><div class="th"></div><div class="dn"></div></div></div><div id="status">www.029tec.com/mes/wm/wmstock</div></body></html>
